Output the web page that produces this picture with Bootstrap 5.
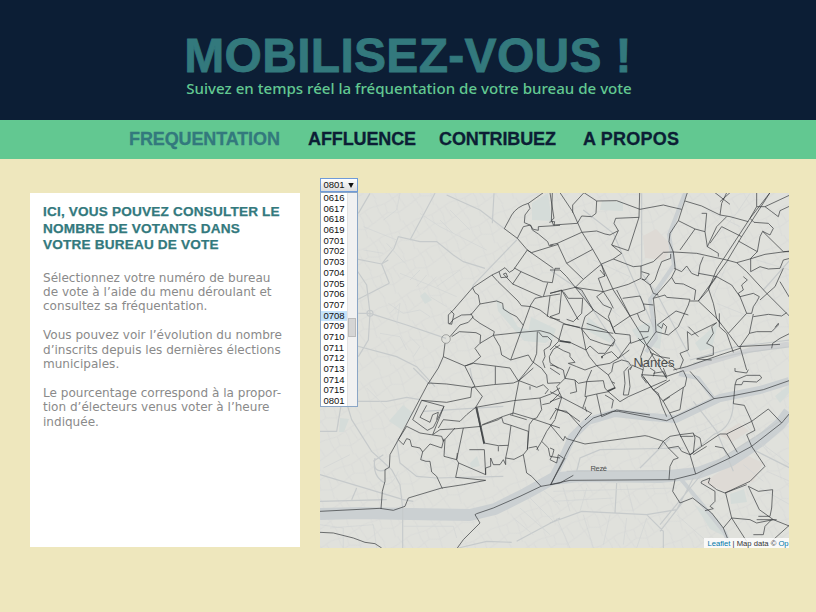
<!DOCTYPE html>
<html lang="fr">
<head>
<meta charset="utf-8">
<meta name="viewport" content="width=device-width, initial-scale=1">
<title>Mobilisez-vous !</title>
<link href="https://cdn.jsdelivr.net/npm/bootstrap@5.3.0/dist/css/bootstrap.min.css" rel="stylesheet">
<style>
body{background:#eee7bd;font-family:"Liberation Sans",Arial,sans-serif;height:612px;overflow:hidden}
.masthead{background:#0c1e35;height:120px;padding-top:32px}
.masthead h1{font:700 48px/48px "Liberation Sans",Arial,sans-serif;color:#33797d;-webkit-text-stroke:.8px #33797d;letter-spacing:.3px}
.tagline{font:500 15.1px/17px "Noto Sans","Open Sans",sans-serif;color:#62c891;padding-left:2px}
.mainnav{background:#62c891;height:39px;padding-left:129px}
.mainnav .nav-link{font:700 18px/38px "Liberation Sans",Arial,sans-serif;letter-spacing:-.12px;color:#0c1e35;-webkit-text-stroke:.3px;padding:0;white-space:nowrap}
.mainnav .nav-link.active{color:#33797d}
.mainnav .nav-link:last-child{letter-spacing:.25px}
.w-freq{width:179px}.w-aff{width:131px}.w-con{width:144px}
.content-row{padding:34px 27px 0 30px;gap:20px}
.info{width:270px;height:354px;padding:11px 0 0 13px;white-space:nowrap}
.info h2{font:700 13.6px/16.5px "Liberation Sans",Arial,sans-serif;letter-spacing:.18px;color:#33797d;-webkit-text-stroke:.25px;margin-bottom:17px}
.info p{font:12.05px/14.4px "DejaVu Sans",Verdana,sans-serif;color:#8a8a8a;margin-bottom:14.4px}
.mapbox{width:469px;height:355px}
.mapbox svg{display:block}
.picker{top:-15px;left:0;width:38px;font:9.5px/10.7px "Liberation Sans",Arial,sans-serif;color:#111}
.picker-head{height:14px;border:1px solid #6f9bd8;background:linear-gradient(#fff,#ddd);padding:0 3px 0 2.5px}
.picker-head svg{width:6px;height:5px}
.picker-list{height:215px;border:1px solid #8ba6c6;background:#fff}
.picker-list ul{width:26px}
.picker-list li{padding-left:2.5px;height:10.7px;line-height:10px}
.picker-list li.chosen{background:#c5e3fa}
.scroller{width:10px;background:#f1f1f1;border-left:1px solid #e3e3e3;padding-top:125px}
.scroller i{display:block;width:8px;height:19px;background:#d5d5d5;border:1px solid #bbb}
.attrib{right:0;bottom:0;width:85px;height:10px;background:rgba(255,255,255,.8);font:7.65px/11px "Liberation Sans",Arial,sans-serif;color:#333;padding-left:3.5px;white-space:nowrap}
.attrib a{color:#0078a8;text-decoration:none}
.bound{fill:none;stroke:#35383b;stroke-opacity:.8;stroke-width:2.6;stroke-linejoin:round}
.road{fill:none;stroke:#c6cacb;stroke-width:3.5}
.minor{fill:none;stroke:#d2d5d4;stroke-width:2}
</style>
<script src="https://cdn.jsdelivr.net/npm/bootstrap@5.3.0/dist/js/bootstrap.bundle.min.js"></script>
</head>
<body>
<header class="masthead text-center">
  <h1 class="mb-0 text-nowrap">MOBILISEZ-VOUS !</h1>
  <div class="tagline text-nowrap">Suivez en temps réel la fréquentation de votre bureau de vote</div>
</header>
<nav class="mainnav d-flex">
  <a class="nav-link active w-freq" href="#">FREQUENTATION</a>
  <a class="nav-link w-aff" href="#">AFFLUENCE</a>
  <a class="nav-link w-con" href="#">CONTRIBUEZ</a>
  <a class="nav-link" href="#">A PROPOS</a>
</nav>
<main class="content-row d-flex">
  <section class="info bg-white flex-shrink-0">
    <h2>ICI, VOUS POUVEZ CONSULTER LE<br>NOMBRE DE VOTANTS DANS<br>VOTRE BUREAU DE VOTE</h2>
    <p>Sélectionnez votre numéro de bureau<br>de vote à l’aide du menu déroulant et<br>consultez sa fréquentation.</p>
    <p>Vous pouvez voir l’évolution du nombre<br>d’inscrits depuis les dernières élections<br>municipales.</p>
    <p>Le pourcentage correspond à la propor-<br>tion d’électeurs venus voter à l’heure<br>indiquée.</p>
  </section>
  <section class="mapbox position-relative flex-shrink-0">
    <svg width="469" height="355" viewBox="0 0 469 355">
      <defs>
        <pattern id="streets" width="37" height="31" patternUnits="userSpaceOnUse" patternTransform="rotate(-27)">
          <path d="M0 5L16 8L37 5M0 20L14 17L24 22L37 20M9 0L7 12L10 31M24 0L26 12L22 31M16 8L14 17M31 6L33 20" fill="none" stroke="#d4d6d5" stroke-width=".7"/>
        </pattern>
      </defs>
      <rect width="469" height="355" fill="#e0e1dc"/>
      <rect width="469" height="355" fill="url(#streets)" opacity=".65"/>
      <g fill="#d5dcd9">
        <path d="M212 10L228 0L232 28L212 27ZM176 106L190 120L198 134L216 139L230 146L226 150L204 148L190 132L178 118ZM211 124L236 136L232 148L208 140ZM268 124L292 144L290 150L266 137ZM325 130H343L340 156L320 150L312 137ZM282 8L303 9V18L280 17ZM18 22L27 29L24 34L16 29ZM105 99L112 107L105 111L100 103ZM20 225L29 226L24 239H19ZM375 312L398 326L410 346L390 336ZM69 228L83 212L93 220L82 237ZM410 301L424 296L427 309L411 311ZM455 203L469 192V200L460 210ZM150 270L157 263L160 273L151 275ZM375 150L398 130L392 155L380 158Z"/>
      </g>
      <g fill="#dedad5"><path d="M323 43L336 36L351 52L345 67L325 65ZM382 290L426 262L443 270L434 288L407 299L388 292ZM399 242L419 230L429 238L412 249Z"/></g>
      <!-- rail yard east of the centre -->
      <path d="M360 178L400 166L430 157L469 151" fill="none" stroke="#d0d2d3" stroke-width="5"/>
      <!-- rivers -->
      <g fill="none" stroke="#cbd0d2" stroke-linejoin="round">
        <path stroke-width="12" d="M0 321L40 320L90 321L150 322L175 316L205 301L232 286L260 283L340 284L378 280L410 268L440 248L460 231L469 219"/>
        <path stroke-width="8" d="M232 286L244 262L252 244L268 228L295 220L330 224L356 226L400 205L440 197L469 188"/>
        <path stroke-width="4" d="M365 0L349 42L354 72L330 107L336 145L326 159M360 285L385 315L405 340L410 355M359 181L378 185L394 206"/>
      </g>
      <!-- main roads and local streets -->
      <g transform="translate(0,-3) scale(.33333)">
        <path class="road" d="M345 10L270 150M380 15L480 60L555 118M517 100L522 10M115 70L150 10M208 280L185 222L222 175L235 140L300 155L350 155L400 195L430 215L495 235M100 205L185 222L205 210M110 240L140 285L150 370L145 450L115 500M115 370L150 370L260 405L378 445M100 465L230 500L290 530L345 590M590 150L460 285L455 300M208 280L110 330"/>
        <circle class="road" cx="150" cy="370" r="9"/>
        <path class="minor" d="M130 110L230 150M200 160L255 220M300 70L360 110L420 140L500 180M360 90L400 130M390 60L450 120M240 250L340 290L410 320M270 270L300 240M290 290L320 255M310 300L350 260M205 340L250 370L300 360L330 380M210 370L240 340L230 400M180 430L240 440L260 480M270 440L300 470L280 500M240 10L230 60L190 90M420 240L350 290M330 320L380 350M130 180L190 190"/>
      </g>
      <g transform="translate(0,175) scale(.33333)">
        <path class="road" d="M80 105L95 155L155 250L215 305L240 350L248 420V540M230 220L240 285L290 325L350 330L550 325M0 320L100 350L250 395L280 400M160 280L190 260M0 190L50 190L65 100L200 100L260 88L300 95M0 400L200 395M110 360L95 395M310 130L550 115M590 520L720 450M415 540L500 520L575 523M450 0L460 50M280 0L330 50"/>
        <path class="road" d="M200 305Q155 320 165 270M165 270Q155 325 195 345"/>
        <path class="minor" d="M235 310Q220 350 195 350M0 470L70 480V540M30 480L160 470L170 540M250 475H400L410 510M580 450L640 500M600 420L690 500M620 380L700 460M650 350L720 410M30 40L60 80M140 60L200 120M10 300L90 260M290 250L330 300M370 250L430 310"/>
      </g>
      <g transform="translate(230,-3) scale(.33333)">
        <path class="road" d="M275 10V250L320 310L420 500M100 60L190 130L310 410M420 510L560 470L720 450M430 520L570 490L720 470M640 300L720 210M0 240L90 300L240 530"/>
        <path class="minor" d="M600 10L560 70L500 140M470 60L570 110M620 210L720 240M500 340L600 380M540 200L490 320M150 330L210 380M320 360L420 430M60 200L110 270M360 230L500 260M130 210L240 260L190 310"/>
      </g>
      <g transform="translate(230,175) scale(.33333)">
        <path class="road" d="M0 465L95 430L290 440L380 425L430 330M200 345L195 435M80 310L90 270L150 245L400 240M50 310L350 308M270 300L360 210M430 100L500 190L550 310M550 100Q550 180 490 200L420 260M290 440L340 490V540M330 470L470 300L720 140M330 490L400 400M600 240L720 300"/>
        <path class="minor" d="M10 370L380 360M40 360L60 430M110 360L90 430M10 400L190 390M230 350L250 430M20 450L60 540M100 440L130 540M180 440L160 530M230 450L220 530M290 450L260 540M380 440L470 520M630 360L720 410M650 310L720 340M580 290L640 340M430 200L520 160M580 160L660 260M640 230L720 290"/>
      </g>
      <!-- polling district limits -->
      <g class="bound">
        <g transform="translate(0,-3) scale(.33333)">
          <path d="M670 8L625 40Q590 50 575 75L553 116L592 145L622 180L580 240L568 247L555 233L537 245L516 255L458 293L400 360L385 375L385 400L395 403L402 372L392 362M516 255L534 275L594 333L604 347L634 350L660 360L690 383L720 390M537 245L543 263L563 261L558 249L550 252L580 284M578 282L645 312L665 320M578 282L603 245L583 234M603 245L670 275L697 278L705 235L720 235M683 278L670 320L645 325L632 345L602 427L572 510M670 320L720 312M690 318L682 380M622 180L634 188L715 163M622 180L700 235M592 145L610 110L632 105L637 120L655 132L683 155L688 168L700 165M625 40L630 55L615 75L613 98L630 105L640 118L655 121V110L720 106M697 8L694 95L688 97M694 95H704L702 107M458 293L465 308L475 315L480 342L465 360L453 374L425 375L400 388L388 403M480 342L530 333L548 340L550 357L570 370L590 380L610 406M453 370L460 385L480 400L523 425L520 436L602 427L660 422L690 430L720 450M390 440L420 405L445 397L460 380M395 440L418 425L468 428L482 435L480 460L465 475L482 500L460 518L435 528M480 460L520 436L540 470L545 495L572 510M375 460L370 500L355 534L325 580M370 500L435 528L460 520L570 534L595 573M572 510L625 495L637 515L665 535L680 555L683 580L720 578M652 425L650 490L640 517L610 555L595 573M655 425L668 440L683 440L695 452L690 468L672 480L675 500L668 515L675 534M720 465L700 478L688 500L690 518L715 535"/>
          <circle cx="378" cy="447" r="13" stroke-opacity=".4"/>
        </g>
        <g transform="translate(0,175) scale(.33333)">
          <path d="M325 45L380 48L455 58L520 50L580 45L597 38L640 0M435 -5L465 55L455 60L452 88L380 103L305 97M325 45L235 215L210 260L208 298L195 305V340L187 370L183 423M526 -5V48M597 38L585 100L578 140M465 58L487 85L467 118L580 98L660 90L692 78L720 60M597 38L650 58L670 50L685 65L675 78M305 97L278 155L322 187L340 178L372 115L305 97M320 112L300 148L330 163L338 140L355 133L350 155M372 115L338 200L360 185L400 183L485 175M355 180L370 155L420 160L440 140L467 118M467 118L492 225M471 118L494 225M487 170L550 145L580 135L640 153L720 180M485 172L535 155L545 148L550 165L573 172L565 232L535 233L492 225M573 172L625 190L622 245L610 260L582 274L557 270L565 232M260 175L300 195L365 205L370 220L405 180M260 175L235 215L250 230L260 212L270 215L275 235L300 240L308 252L330 228L365 240L372 212M308 252L302 275L318 280L330 280L335 312L350 325L367 362M375 215L372 265L410 275L430 180M410 275L412 255M410 275L416 285L497 320L493 245L448 245M416 285L407 328L497 337L430 350L365 360L265 390L255 415L220 427L180 421L0 430M497 320V300L512 295V270L520 290L540 290L550 275L557 290V270M535 235V250M610 260L620 315L635 325L663 355M660 90L665 125L650 150L640 153L628 170L622 245M650 245L665 220L680 190L705 155M665 220L685 240L690 265L720 270M690 0L720 20M0 493L40 495L100 510L135 523L165 527L185 540M412 540L430 515L465 480L480 465L465 440L470 437L520 420L600 385L663 355L720 345L760 322M692 350L735 270M625 240L650 235L655 248M630 55V65M667 110L690 105L720 75M620 155L570 140"/>
          <path stroke-width="4" d="M469 118L492 228"/>
        </g>
        <g transform="translate(230,-3) scale(.33333)">
          <path d="M30 8L68 65L95 125L128 178L155 225L190 300L240 378L272 430L290 465L380 540M102 8L140 33L200 32L270 58L340 45L360 50L395 58M102 8L68 45V68M140 33L138 70L125 80L95 78L82 100L10 105L5 90L12 85L0 8M269 8L267 82L235 182L185 165L205 122L180 135L165 132L140 123L95 127M267 82L197 85L192 100L205 122M185 165L215 190L190 207L155 222L100 268L76 292M128 178L50 220L22 160L0 165M22 160L95 127M50 220L100 268M0 240L30 240L50 260L76 292L0 310M76 292L160 305L235 283L273 265V228L250 230L190 207M273 228L310 215L340 187L370 186L440 190L530 210L560 218L600 207L645 193L720 183M412 8L385 92L360 130L357 155L370 186L376 240L365 262L310 325L316 385L318 425L290 465M405 33L455 48L510 75L540 80L595 95M660 8L600 85L500 238L475 300L445 333M660 8L575 140L530 215L445 333M385 92L435 117L390 180M435 117L465 125L472 170L500 110L530 80M465 125L470 70L455 70M472 170L505 190V200M480 160L515 110L575 140M530 8L515 40L510 75M495 8L540 43M540 8L510 35M620 8L620 50L600 85M620 50H645L665 65L685 80L690 62L720 48M645 50L720 15M600 85L612 97L655 100L670 115L660 135L638 124L630 140L622 185L565 153M638 124L700 185L720 185M622 185L602 205V245L630 230L655 237L690 235L700 210L720 205M560 218L590 245L650 310L720 380M700 235L675 290L630 330M690 275L720 325M500 260L545 285L570 320L590 370L535 430M500 260L475 295L490 340L500 385L535 430L565 470L690 463M445 333L500 385L510 400M508 370V410L530 430L550 487M580 260L592 270L575 285L580 300L565 310L570 320L610 310L628 320L620 335L610 350L605 370L590 370M610 372L598 430L570 470M610 380L655 373L695 378L710 368M598 430L620 425L665 425L685 405L685 400L675 412M570 470L590 540M570 475L510 495L410 530L370 540M485 510L440 507L490 495V470L470 460L490 430L485 410L500 398L425 435L412 425L415 480L390 490L400 510L390 535M665 475L668 460L690 445L720 430M310 325L345 315L350 322L420 328L415 345L385 410L355 435L318 425M445 333H420M415 375L378 363L322 405L335 415L340 400L350 410L345 430M415 410L445 440M373 235L395 245L410 228L425 250L445 258L450 225L460 200M445 250L500 260M365 262L375 280L400 282L437 300L433 330M275 245L298 252L285 270L275 268M300 285L315 270L325 240L335 215L362 205V192M275 265L300 285L310 310L325 315M160 305L145 265L165 258L155 225M150 240L165 258M160 305L140 320L160 345L185 355L175 380L195 430M160 305L180 335L190 355M200 300L240 378L190 412M218 325L270 318L280 342L310 345M280 342L285 360L262 370L270 390L298 410L295 425L270 425M240 378L262 370M76 292L130 360L180 395L195 430L240 435L242 460M76 292L95 300L130 360M0 310L35 300L85 390M40 305L55 325L98 325L95 370L70 395L50 388M35 300L28 370L0 380M0 380L45 402L95 415L190 430M130 360L105 380L95 415M242 460L270 450L295 440"/>
        </g>
        <!-- centre of Nantes -->
        <g transform="translate(230,127) scale(.33333)">
          <path d="M40 12L90 22M110 10L170 32L195 60L188 78L160 72L120 58L95 27M40 12L25 65L0 90M30 62L60 67L108 90L95 25M108 90L118 110L140 137L105 150L80 140L55 130L75 127L60 110V100L40 92L15 78M108 90L120 78L145 100H165L192 65M155 110L170 100L185 95L205 115L180 130L140 137L175 165L185 155L190 130L215 120L235 125L245 140L240 150M205 115L242 65M205 115L238 90M175 165L185 185L195 203L175 215L140 222L155 290M140 222L105 230L110 185L85 190L75 180L45 175L60 140M45 175L40 150L15 138L0 135M45 175L20 200L35 232L0 245M35 232L15 298M35 232L98 265L110 230M35 232L0 215M110 185L160 182L165 205L175 215L210 245L235 230L350 180M98 265L125 280L105 300M105 260L110 275M155 290L200 270L300 285M15 265L55 280L90 305M245 140L235 150L240 200L235 225L220 225L225 190L222 155L235 140M265 55L285 75L272 110L280 145L275 170L290 190M245 135L280 150M290 75L305 100L330 110L360 115M300 95L350 175M280 170L310 210L325 220L335 255L350 290M350 175L340 155L310 160M290 130L310 100M310 210L360 180M338 245L360 230M185 185L195 190M75 180L80 215L60 220M110 185L125 150M165 225L190 240L185 265"/>
          <path stroke-width="5" d="M28 63L62 68M173 213L196 203M156 108V115"/>
        </g>
        <g transform="translate(230,175) scale(.33333)">
          <path d="M275 20L310 65L340 100L370 155L390 200L420 260L437 318M275 20L350 25L400 8M340 97L405 55L410 30L400 8M358 135L390 125L400 58M420 10L492 92M188 130H205L350 158L492 92L550 83L640 65L720 37M188 130L130 150L95 180L60 235L3 348M0 350L60 337L370 335L437 318L540 270L605 235L695 165L720 135M555 0V10L590 15L595 5M555 50L560 35L590 22L630 22L635 30L620 42L580 40L575 50H555L550 107L583 112L605 160L615 187L590 200L605 235L645 295L600 340L525 375L500 365L475 345L480 330L455 340L453 345L495 370L495 400L480 415L490 422L465 428M605 160L655 123L695 165M605 160L530 198L510 198L455 235L420 260M530 198L562 253M520 240L540 270M495 235L520 240M470 235L430 260M390 200L430 195L435 210L430 255L420 260M390 205H430M390 200L360 205L340 220L325 243M340 220L295 205L285 203L105 228L50 212L45 205L40 218L0 170M0 155L18 125L50 130L95 180M340 220L355 240L385 270L370 275L360 295L357 335M355 240L385 235L395 250L420 260M375 335L368 370L390 405L428 390L485 435L520 480L532 510M520 480L545 450L527 375M545 450L600 455L620 465L670 455L720 475M595 355L628 425L670 455M595 355L625 370L668 365L665 420L660 445L625 445M545 450L590 520M665 455L645 475L640 500L610 500M670 515L720 470M620 455L680 455M0 240L12 245L8 260L0 275L20 285L25 260L40 270M525 375L590 350M430 200L450 210L455 235M300 0L315 10L310 25M340 0L350 25"/>
        </g>
      </g>
      <g font-family="Liberation Sans,Arial,sans-serif" fill="#4c4e4e">
        <text x="313.5" y="173.5" font-size="13" textLength="41">Nantes</text>
        <text x="270.5" y="278" font-size="7.5" textLength="16.5">Rezé</text>
      </g>
    </svg>
    <div class="picker position-absolute">
      <div class="picker-head d-flex justify-content-between align-items-center"><span>0801</span><svg viewBox="0 0 6 5"><path d="M.3 0H5.7L3 5Z" fill="#111"/></svg></div>
      <div class="picker-list d-flex">
        <ul class="list-unstyled mb-0">
          <li>0616</li><li>0617</li><li>0618</li><li>0619</li><li>0701</li><li>0702</li><li>0703</li><li>0704</li><li>0705</li><li>0706</li><li>0707</li><li class="chosen">0708</li><li>0709</li><li>0710</li><li>0711</li><li>0712</li><li>0713</li><li>0714</li><li>0715</li><li>0801</li>
        </ul>
        <div class="scroller"><i></i></div>
      </div>
    </div>
    <div class="attrib position-absolute"><a href="#">Leaflet</a> | Map data © <a href="#">Op</a></div>
  </section>
</main>
</body>
</html>
